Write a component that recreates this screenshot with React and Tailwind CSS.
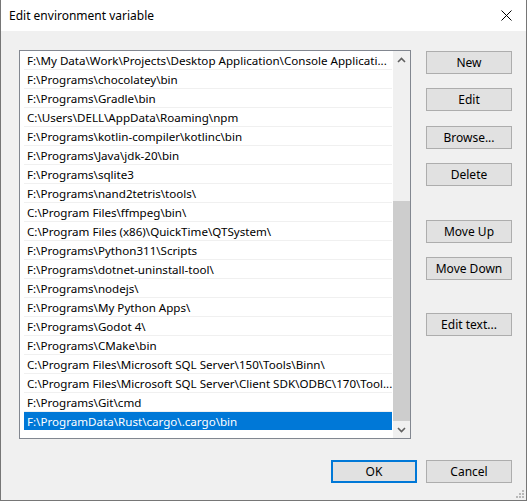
const PATHS = [
  "F:\\My Data\\Work\\Projects\\Desktop Application\\Console Applicati...",
  "F:\\Programs\\chocolatey\\bin",
  "F:\\Programs\\Gradle\\bin",
  "C:\\Users\\DELL\\AppData\\Roaming\\npm",
  "F:\\Programs\\kotlin-compiler\\kotlinc\\bin",
  "F:\\Programs\\Java\\jdk-20\\bin",
  "F:\\Programs\\sqlite3",
  "F:\\Programs\\nand2tetris\\tools\\",
  "C:\\Program Files\\ffmpeg\\bin\\",
  "C:\\Program Files (x86)\\QuickTime\\QTSystem\\",
  "F:\\Programs\\Python311\\Scripts",
  "F:\\Programs\\dotnet-uninstall-tool\\",
  "F:\\Programs\\nodejs\\",
  "F:\\Programs\\My Python Apps\\",
  "F:\\Programs\\Godot 4\\",
  "F:\\Programs\\CMake\\bin",
  "C:\\Program Files\\Microsoft SQL Server\\150\\Tools\\Binn\\",
  "C:\\Program Files\\Microsoft SQL Server\\Client SDK\\ODBC\\170\\Tool...",
  "F:\\Programs\\Git\\cmd",
  "F:\\ProgramData\\Rust\\cargo\\.cargo\\bin",
];

// side buttons with their gap above
const SIDE = [
  { label: "New", mt: "mt-0" },
  { label: "Edit", mt: "mt-[14px]" },
  { label: "Browse...", mt: "mt-[15px]" },
  { label: "Delete", mt: "mt-[14px]" },
  { label: "Move Up", mt: "mt-[34px]" },
  { label: "Move Down", mt: "mt-[14px]" },
  { label: "Edit text...", mt: "mt-[33px]" },
];

const Chevron = ({ up }) => (
  <svg width="9" height="6" viewBox="0 0 9 6">
    <polyline
      points={up ? "1,5 4.5,1.5 8,5" : "1,1 4.5,4.5 8,1"}
      fill="none"
      stroke="#606060"
      strokeWidth="1.6"
    />
  </svg>
);

const WinButton = ({ label, className = "", primary }) => (
  <button
    className={`w-[86px] h-[23px] bg-[#e1e1e1] text-[12px] text-black leading-none flex items-center justify-center ${
      primary ? "border-2 border-[#0078d7]" : "border border-[#adadad]"
    } ${className}`}
  >
    {label}
  </button>
);

export default function App() {
  const selected = PATHS.length - 1;

  return (
    <div
      className="relative w-[527px] h-[501px] flex flex-col bg-[#f0f0f0] border-x border-b border-[#767676] overflow-hidden"
      style={{ fontFamily: '"Noto Sans", "Segoe UI", sans-serif' }}
    >
      {/* Title bar */}
      <div className="h-[31px] bg-white flex items-center justify-between pl-[8px] pr-[14px] shrink-0">
        <span className="text-[12px] text-black">Edit environment variable</span>
        <svg width="11" height="11" viewBox="0 0 11 11">
          <path d="M0.5 0.5 L10.5 10.5 M10.5 0.5 L0.5 10.5" stroke="#000" strokeWidth="1" />
        </svg>
      </div>

      {/* Body */}
      <div className="flex items-start mt-[19px] ml-[18px]">
        {/* List box */}
        <div className="w-[392px] h-[389px] border border-[#828790] bg-white flex">
          <div className="pl-[4px] w-[372px]">
            {PATHS.map((p, i) => (
              <div
                key={i}
                className={`h-[19px] w-[368px] border-b ${
                  i === selected
                    ? "bg-[#0078d7] text-white border-white"
                    : "text-black border-[#f0f0f0]"
                }`}
              >
                <div className="pl-[3px] pt-[1px] text-[11.6px] leading-[17px] whitespace-nowrap overflow-hidden">
                  {p}
                </div>
              </div>
            ))}
          </div>
          <div className="ml-[1px] w-[17px] h-full bg-[#f0f0f0] flex flex-col">
            <div className="h-[17px] flex items-center justify-center">
              <Chevron up />
            </div>
            <div className="flex-1" />
            <div className="h-[220px] bg-[#cdcdcd]" />
            <div className="h-[17px] flex items-center justify-center">
              <Chevron />
            </div>
          </div>
        </div>

        {/* Side buttons */}
        <div className="ml-[15px] pt-[1px] flex flex-col">
          {SIDE.map((b) => (
            <WinButton key={b.label} label={b.label} className={b.mt} />
          ))}
        </div>
      </div>

      {/* Bottom buttons */}
      <div className="mt-[21px] flex justify-end gap-[9px] pr-[14px]">
        <WinButton label="OK" primary />
        <WinButton label="Cancel" />
      </div>

      {/* Resize grip */}
      <svg className="absolute right-[2px] bottom-[2px]" width="9" height="9" viewBox="0 0 9 9">
        {[
          [7, 1],
          [4, 4],
          [7, 4],
          [1, 7],
          [4, 7],
          [7, 7],
        ].map(([x, y]) => (
          <rect key={`${x}-${y}`} x={x} y={y} width="2" height="2" fill="#b8b8b8" />
        ))}
      </svg>
    </div>
  );
}
